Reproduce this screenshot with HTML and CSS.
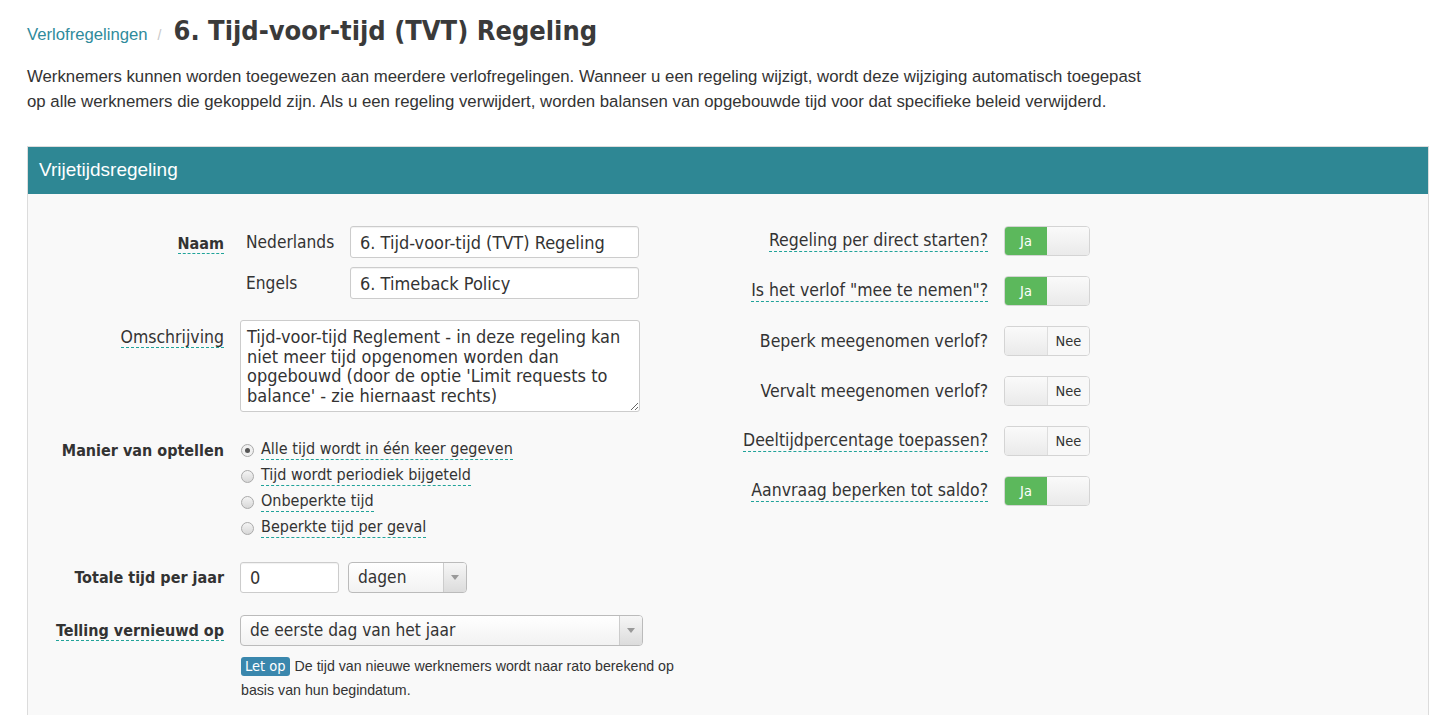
FILE: index.html
```html
<!DOCTYPE html>
<html lang="nl">
<head>
<meta charset="utf-8">
<title>6. Tijd-voor-tijd (TVT) Regeling</title>
<link rel="stylesheet" href="styles.css">
</head>
<body>
<div class="page">
  <div class="crumbs">
    <a class="crumb" href="#">Verlofregelingen</a>
    <span class="sep">/</span>
    <h1 class="title">6. Tijd-voor-tijd (TVT) Regeling</h1>
  </div>
  <p class="intro">Werknemers kunnen worden toegewezen aan meerdere verlofregelingen. Wanneer u een regeling wijzigt, wordt deze wijziging automatisch toegepast<br>op alle werknemers die gekoppeld zijn. Als u een regeling verwijdert, worden balansen van opgebouwde tijd voor dat specifieke beleid verwijderd.</p>

  <section class="panel">
    <header class="panel-head">Vrijetijdsregeling</header>
    <div class="panel-body">
      <div class="col-left">
        <div class="row row-naam">
          <div class="lbl"><span class="bold tip">Naam</span></div>
          <div class="ctrl">
            <div class="lang-row">
              <span class="lang">Nederlands</span>
              <input class="input input-name" type="text" value="6. Tijd-voor-tijd (TVT) Regeling">
            </div>
            <div class="lang-row lang-row-2">
              <span class="lang">Engels</span>
              <input class="input input-name" type="text" value="6. Timeback Policy">
            </div>
          </div>
        </div>

        <div class="row row-desc">
          <div class="lbl lbl-desc"><span class="tip">Omschrijving</span></div>
          <div class="ctrl">
            <textarea class="textarea">Tijd-voor-tijd Reglement - in deze regeling kan niet meer tijd opgenomen worden dan opgebouwd (door de optie 'Limit requests to balance' - zie hiernaast rechts)</textarea>
          </div>
        </div>

        <div class="row row-radios">
          <div class="lbl lbl-line"><span class="bold">Manier van optellen</span></div>
          <div class="ctrl radios">
            <div class="radio"><span class="dot checked"></span><span class="tip">Alle tijd wordt in één keer gegeven</span></div>
            <div class="radio"><span class="dot"></span><span class="tip">Tijd wordt periodiek bijgeteld</span></div>
            <div class="radio"><span class="dot"></span><span class="tip">Onbeperkte tijd</span></div>
            <div class="radio"><span class="dot"></span><span class="tip">Beperkte tijd per geval</span></div>
          </div>
        </div>

        <div class="row row-total">
          <div class="lbl lbl-mid"><span class="bold">Totale tijd per jaar</span></div>
          <div class="ctrl inline">
            <input class="input input-num" type="text" value="0">
            <div class="select select-unit"><span class="sel-text">dagen</span><span class="sel-arrow"></span></div>
          </div>
        </div>

        <div class="row row-reset">
          <div class="lbl lbl-mid"><span class="bold tip">Telling vernieuwd op</span></div>
          <div class="ctrl">
            <div class="select select-wide"><span class="sel-text">de eerste dag van het jaar</span><span class="sel-arrow"></span></div>
            <div class="help">
              <div class="help-line"><span class="badge">Let op</span><span class="help-text">De tijd van nieuwe werknemers wordt naar rato berekend op</span></div>
              <div class="help-line">basis van hun begindatum.</div>
            </div>
          </div>
        </div>
      </div>

      <div class="col-right">
        <div class="trow">
          <span class="tlbl"><span class="tip">Regeling per direct starten?</span></span>
          <span class="toggle on"><span class="t-a">Ja</span><span class="t-b"></span></span>
        </div>
        <div class="trow">
          <span class="tlbl"><span class="tip">Is het verlof "mee te nemen"?</span></span>
          <span class="toggle on"><span class="t-a">Ja</span><span class="t-b"></span></span>
        </div>
        <div class="trow">
          <span class="tlbl"><span>Beperk meegenomen verlof?</span></span>
          <span class="toggle off"><span class="t-a"></span><span class="t-b">Nee</span></span>
        </div>
        <div class="trow">
          <span class="tlbl"><span>Vervalt meegenomen verlof?</span></span>
          <span class="toggle off"><span class="t-a"></span><span class="t-b">Nee</span></span>
        </div>
        <div class="trow">
          <span class="tlbl"><span class="tip">Deeltijdpercentage toepassen?</span></span>
          <span class="toggle off"><span class="t-a"></span><span class="t-b">Nee</span></span>
        </div>
        <div class="trow">
          <span class="tlbl"><span class="tip">Aanvraag beperken tot saldo?</span></span>
          <span class="toggle on"><span class="t-a">Ja</span><span class="t-b"></span></span>
        </div>
      </div>
    </div>
  </section>
</div>
</body>
</html>
```

FILE: styles.css
```css
html, body {
  margin: 0;
  padding: 0;
  background: #ffffff;
}

body {
  font-family: "Liberation Sans", Arial, sans-serif;
  color: #333333;
}

.page {
  padding: 0 11px 0 27px;
}

.crumbs {
  display: flex;
  align-items: baseline;
  padding-top: 14px;
  height: 34px;
}

.crumb {
  color: #2f8b9c;
  text-decoration: none;
  font-size: 16.7px;
}

.sep {
  color: #c8c8c8;
  font-size: 14px;
  margin: 0 12px 0 10px;
}

.title {
  margin: 0;
  font-family: "DejaVu Sans Condensed", "DejaVu Sans", sans-serif;
  font-stretch: condensed;
  font-weight: bold;
  font-size: 27px;
  line-height: 34px;
  color: #3a3a3a;
}

.intro {
  margin: 16px 0 0;
  font-size: 16.8px;
  line-height: 25px;
  color: #333333;
}

.panel {
  margin-top: 32px;
  border: 1px solid #dcdcdc;
  border-bottom: none;
  background: #f9f9f9;
}

.panel-head {
  background: #2e8794;
  color: #ffffff;
  font-size: 19px;
  height: 47px;
  line-height: 46px;
  padding: 0 11px;
}

.panel-body {
  display: flex;
  padding: 32px 0 24px;
  font-family: "DejaVu Sans Condensed", "DejaVu Sans", sans-serif;
  font-stretch: condensed;
  font-size: 17.5px;
  color: #333333;
}

.col-left {
  width: 692px;
  flex: none;
}

.row {
  display: flex;
  gap: 16px;
}

.lbl {
  width: 196px;
  flex: none;
  text-align: right;
  line-height: 32px;
}

.row-naam .lbl {
  padding-top: 1px;
}

.bold {
  font-weight: bold;
  font-size: 16px;
}

.tip {
  border-bottom: 1px dashed #20a39a;
  line-height: 1.15;
  display: inline-block;
}

.ctrl {
  flex: none;
}

.lang-row {
  display: flex;
  align-items: center;
}

.lang-row-2 {
  margin-top: 9px;
}

.lang {
  width: 104px;
  padding-left: 6px;
  font-size: 17.2px;
}

.input {
  box-sizing: border-box;
  height: 32px;
  border: 1px solid #cccccc;
  border-radius: 3px;
  background: #ffffff;
  box-shadow: inset 0 1px 1px rgba(0, 0, 0, 0.06);
  font: inherit;
  font-size: 18px;
  color: #333333;
  padding: 0 9px;
  margin: 0;
}

.input-name {
  width: 289px;
}

.row-desc {
  margin-top: 21px;
}

.lbl-desc {
  line-height: 20px;
  padding-top: 7px;
}

.textarea {
  box-sizing: border-box;
  display: block;
  width: 400px;
  height: 92px;
  margin: 0;
  border: 1px solid #cccccc;
  border-radius: 3px;
  background: #ffffff;
  font: inherit;
  font-size: 18px;
  line-height: 19.5px;
  color: #333333;
  padding: 6px 6px;
  resize: vertical;
}

.row-radios {
  margin-top: 25px;
}

.lbl-line {
  line-height: 26px;
}

.radios {
  display: flex;
  flex-direction: column;
  font-size: 16px;
}

.radio {
  display: flex;
  align-items: center;
  height: 26px;
  gap: 7px;
  padding-left: 1px;
}

.dot {
  box-sizing: border-box;
  width: 13px;
  height: 13px;
  border-radius: 50%;
  border: 1px solid #aaaaaa;
  background: linear-gradient(#f4f4f4, #d8d8d8);
  position: relative;
  flex: none;
}

.dot.checked {
  background: #f0f0f0;
}

.dot.checked::after {
  content: "";
  position: absolute;
  left: 3px;
  top: 3px;
  width: 5px;
  height: 5px;
  border-radius: 50%;
  background: #555555;
}

.row-total {
  margin-top: 21px;
}

.lbl-mid {
  line-height: 31px;
}

.inline {
  display: flex;
  gap: 9px;
}

.input-num {
  width: 99px;
  height: 31px;
}

.select {
  box-sizing: border-box;
  display: flex;
  height: 31px;
  border: 1px solid #bbbbbb;
  border-radius: 4px;
  background: linear-gradient(#ffffff, #f2f2f2);
  color: #333333;
  font-size: 17.2px;
}

.sel-text {
  flex: 1;
  line-height: 29px;
  padding-left: 9px;
}

.sel-arrow {
  width: 22px;
  border-left: 1px solid #cccccc;
  background: linear-gradient(#f6f6f6, #dcdcdc);
  border-radius: 0 3px 3px 0;
  position: relative;
}

.sel-arrow::after {
  content: "";
  position: absolute;
  left: 7px;
  top: 12px;
  border-left: 4px solid transparent;
  border-right: 4px solid transparent;
  border-top: 5px solid #999999;
}

.select-unit {
  width: 119px;
}

.row-reset {
  margin-top: 22px;
}

.select-wide {
  width: 403px;
}

.help {
  margin: 8px 0 0;
  font-family: "Liberation Sans", Arial, sans-serif;
  font-stretch: normal;
  font-size: 14.2px;
  line-height: 24px;
  color: #333333;
  padding-left: 1px;
}

.help-line {
  display: flex;
  align-items: center;
  height: 24px;
}

.help-text {
  margin-left: 5px;
}

.badge {
  display: inline-block;
  background: #3a87ad;
  color: #ffffff;
  border-radius: 3px;
  padding: 0 4px;
  line-height: 19px;
  font-family: "DejaVu Sans Condensed", "DejaVu Sans", sans-serif;
  font-stretch: condensed;
  font-size: 14.5px;
}

.col-right {
  display: flex;
  flex-direction: column;
  gap: 20px;
}

.trow {
  display: flex;
  align-items: center;
  gap: 16px;
  height: 30px;
}

.tlbl {
  width: 268px;
  text-align: right;
}

.toggle {
  box-sizing: border-box;
  display: flex;
  width: 86px;
  height: 30px;
  border: 1px solid #d4d4d4;
  border-radius: 4px;
  overflow: hidden;
  font-size: 14.5px;
}

.t-a, .t-b {
  display: flex;
  align-items: center;
  justify-content: center;
}

.t-a {
  width: 42px;
}

.t-b {
  flex: 1;
}

.toggle.on .t-a {
  background: #5cb85c;
  color: #ffffff;
}

.toggle.on .t-b {
  background: linear-gradient(#fafafa, #eaeaea);
}

.toggle.off .t-a {
  background: linear-gradient(#fafafa, #eaeaea);
  border-right: 1px solid #dddddd;
}

.toggle.off .t-b {
  background: #f8f8f8;
  color: #333333;
}
```
